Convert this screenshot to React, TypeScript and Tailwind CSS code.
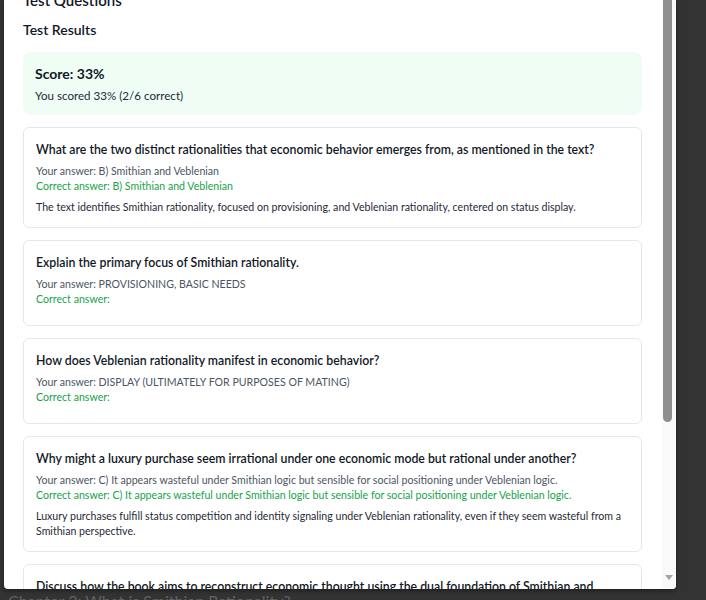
import React from "react";

type Result = {
  question: string;
  yours: string;
  correct: string;
  explanation?: string;
};

const results: Result[] = [
  {
    question:
      "What are the two distinct rationalities that economic behavior emerges from, as mentioned in the text?",
    yours: "B) Smithian and Veblenian",
    correct: "B) Smithian and Veblenian",
    explanation:
      "The text identifies Smithian rationality, focused on provisioning, and Veblenian rationality, centered on status display.",
  },
  {
    question: "Explain the primary focus of Smithian rationality.",
    yours: "PROVISIONING, BASIC NEEDS",
    correct: "",
  },
  {
    question: "How does Veblenian rationality manifest in economic behavior?",
    yours: "DISPLAY (ULTIMATELY FOR PURPOSES OF MATING)",
    correct: "",
  },
  {
    question:
      "Why might a luxury purchase seem irrational under one economic mode but rational under another?",
    yours:
      "C) It appears wasteful under Smithian logic but sensible for social positioning under Veblenian logic.",
    correct:
      "C) It appears wasteful under Smithian logic but sensible for social positioning under Veblenian logic.",
    explanation:
      "Luxury purchases fulfill status competition and identity signaling under Veblenian rationality, even if they seem wasteful from a Smithian perspective.",
  },
  {
    question:
      "Discuss how the book aims to reconstruct economic thought using the dual foundation of Smithian and Veblenian rationality.",
    yours: "",
    correct: "",
  },
];

const ResultCard: React.FC<{ r: Result }> = ({ r }) => (
  <div className="border border-[#e5e7eb] rounded-md p-3">
    <h4 className="text-[12.3px] leading-5 font-semibold text-[#111827] mb-1">{r.question}</h4>
    <div className="text-[10.6px] leading-[15px] mb-1.5">
      <p className="text-[#4b5563]">Your answer: {r.yours}</p>
      <p className="text-[#16a34a]">Correct answer: {r.correct}</p>
    </div>
    {r.explanation && (
      <p className="text-[10.6px] leading-[15px] text-[#1f2937]">{r.explanation}</p>
    )}
  </div>
);

export default function App() {
  return (
    <div
      className="h-[600px] bg-[#333333] overflow-hidden flex flex-col"
      style={{ fontFamily: "Lato, 'Noto Sans', sans-serif" }}
    >
      <div className="ml-1 w-[672px] h-[589px] shrink-0 bg-white rounded-b flex overflow-hidden shadow-[0_2px_4px_rgba(0,0,0,0.4)]">
        <div className="flex-1 overflow-hidden pl-[19px] pr-5">
          <h3 className="-mt-[12px] text-[15px] leading-6 font-semibold text-[#111827]">Test Questions</h3>
          <h3 className="mt-[6px] text-[14px] leading-6 font-semibold text-[#111827]">Test Results</h3>
          <div className="mt-2.5 bg-[#f0fdf4] rounded-lg p-3">
            <p className="text-[14px] leading-5 font-bold text-[#111827]">Score: 33%</p>
            <p className="mt-1 text-[11.6px] leading-[15px] text-[#1f2937]">You scored 33% (2/6 correct)</p>
          </div>
          <div className="mt-3 flex flex-col gap-3">
            {results.map((r, i) => (
              <ResultCard key={i} r={r} />
            ))}
          </div>
        </div>
        <div className="w-[14px] shrink-0 bg-[#f9f9f9] flex flex-col">
          <div className="ml-px w-[9px] h-[422px] bg-[#8f8f8f] rounded-b-[5px]" />
          <div className="flex-1" />
          <div className="h-[20px] flex items-start justify-center pt-[6px] pr-px">
            <div className="w-0 h-0 border-l-[4px] border-r-[4px] border-t-[5px] border-l-transparent border-r-transparent border-t-[#a3a3a3]" />
          </div>
        </div>
      </div>
      <p className="ml-2 text-[16px] leading-6 text-[#616161]">Chapter 2: What is Smithian Rationality?</p>
    </div>
  );
}
